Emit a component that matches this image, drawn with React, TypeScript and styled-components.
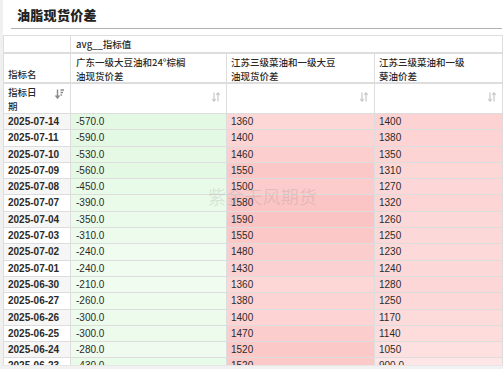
import React from "react";
import styled, { createGlobalStyle } from "styled-components";

/* ─── Global ─── */

const GlobalStyle = createGlobalStyle`
  html, body {
    margin: 0;
    padding: 0;
    background: #f0f0f0;
    overflow: hidden;
  }
  * {
    box-sizing: border-box;
  }
`;

/* ─── Styled Components ─── */

const Page = styled.div`
  width: 504px;
  height: 369px;
  display: flex;
  font-family: "Liberation Sans", "Noto Sans CJK SC", sans-serif;
  color: #333;
`;

const Panel = styled.div`
  flex: 1;
  margin-left: 3px;
  background: #fff;
  display: flex;
  flex-direction: column;
`;

const TitleBar = styled.div`
  height: 29px;
  margin: 0 2px 0 8px;
  padding-left: 6px;
  display: flex;
  align-items: center;
  border-bottom: 1px solid #b0b0b0;
  h1 {
    margin: 0;
    font-family: "Noto Sans CJK SC", sans-serif;
    font-size: 13px;
    font-weight: 900;
    color: #222;
    letter-spacing: 0.3px;
  }
`;

const TableWrap = styled.div`
  position: relative;
  margin-top: 6px;
  height: 330px;
  width: 500px;
  overflow: hidden;
  border-top: 1px solid #ddd;
  border-left: 1px solid #ddd;
  font-size: 9.5px;
`;

const Row = styled.div<{ $h: number; $bb?: number }>`
  display: grid;
  grid-template-columns: 67px 156px 148px 128px;
  height: ${(p) => p.$h}px;
  border-bottom: ${(p) => p.$bb ?? 1}px solid #ddd;
`;

const Cell = styled.div<{ $bold?: boolean; $pad?: number; $span?: boolean }>`
  position: relative;
  border-right: 1px solid #ddd;
  padding-left: ${(p) => p.$pad ?? 4}px;
  font-weight: ${(p) => (p.$bold ? 700 : 400)};
  overflow: hidden;
  white-space: nowrap;
  ${(p) => (p.$span ? "grid-column: 2 / span 3;" : "")}
`;

const HeadCell = styled(Cell)<{ $bottom?: boolean }>`
  display: flex;
  flex-direction: column;
  justify-content: ${(p) => (p.$bottom ? "flex-end" : "flex-start")};
  line-height: 14px;
  padding-top: 1px;
  padding-bottom: 1px;
  font-family: "Noto Sans CJK SC", sans-serif;
  font-weight: 500;
  color: #2a2a2a;
`;

const DataCell = styled(Cell)`
  line-height: 16px;
  font-size: 10px;
  color: #2a2a2a;
`;

const SortBox = styled.span<{ $top: number }>`
  position: absolute;
  right: 6px;
  top: ${(p) => p.$top}px;
  display: flex;
`;

const Scrollbar = styled.div`
  height: 4px;
  width: 500px;
  background: #f1f1f1;
  border-top: 1px solid #e6e6e6;
`;

const Watermark = styled.div`
  position: absolute;
  left: 204px;
  top: 147px;
  font-family: "Noto Sans CJK SC", sans-serif;
  font-size: 18px;
  color: rgba(110, 110, 110, 0.16);
  letter-spacing: 0.2px;
  pointer-events: none;
`;

/* ─── Icons ─── */

const SortDesc = () => (
  <svg width="9" height="10" viewBox="0 0 9 10">
    <path d="M2.5 0.5V8.5M0.5 6.5L2.5 9L4.5 6.5" stroke="#8a8a8a" strokeWidth="1.4" fill="none" />
    <path d="M5.5 1H9M5.5 3.5H8M5.5 6H7" stroke="#8a8a8a" strokeWidth="1.3" />
  </svg>
);

const SortBoth = () => (
  <svg width="8" height="10" viewBox="0 0 8 10">
    <path d="M2 0.5V9M0.3 7L2 9.3L3.7 7" stroke="#c8c8c8" strokeWidth="1.2" fill="none" />
    <path d="M6 9.5V1M4.3 3L6 0.7L7.7 3" stroke="#c8c8c8" strokeWidth="1.2" fill="none" />
  </svg>
);

/* ─── Data ─── */

const rows: [string, string, string, string][] = [
  ["2025-07-14", "-570.0", "1360", "1400"],
  ["2025-07-11", "-590.0", "1400", "1380"],
  ["2025-07-10", "-530.0", "1460", "1350"],
  ["2025-07-09", "-560.0", "1550", "1310"],
  ["2025-07-08", "-450.0", "1500", "1270"],
  ["2025-07-07", "-390.0", "1580", "1320"],
  ["2025-07-04", "-350.0", "1590", "1260"],
  ["2025-07-03", "-310.0", "1550", "1250"],
  ["2025-07-02", "-240.0", "1480", "1230"],
  ["2025-07-01", "-240.0", "1430", "1240"],
  ["2025-06-30", "-210.0", "1360", "1280"],
  ["2025-06-27", "-260.0", "1380", "1250"],
  ["2025-06-26", "-300.0", "1400", "1170"],
  ["2025-06-25", "-300.0", "1470", "1140"],
  ["2025-06-24", "-280.0", "1520", "1050"],
  ["2025-06-23", "-430.0", "1520", "900.0"],
];

const mix = (a: number[], b: number[], t: number) =>
  `rgb(${a.map((v, i) => Math.round(v + (b[i] - v) * t)).join(",")})`;

const scale = (v: number, min: number, max: number) => Math.min(1, Math.max(0, (v - min) / (max - min)));

const greenBg = (v: number) => mix([240, 252, 240], [227, 249, 227], scale(-v, 210, 590));
const red3Bg = (v: number) => mix([253, 214, 214], [251, 196, 196], scale(v, 1360, 1590));
const red4Bg = (v: number) => mix([254, 230, 230], [253, 210, 210], scale(v, 900, 1400));

/* ─── Component ─── */

export default function App() {
  return (
    <>
      <GlobalStyle />
      <Page>
        <Panel>
          <TitleBar>
            <h1>油脂现货价差</h1>
          </TitleBar>

          <TableWrap>
            <Row $h={18} $bb={2}>
              <HeadCell />
              <HeadCell $span $pad={5}>
                <span>avg__指标值</span>
              </HeadCell>
            </Row>

            <Row $h={30} $bb={2}>
              <HeadCell $bottom>
                <span>指标名</span>
              </HeadCell>
              <HeadCell $pad={5}>
                <span>广东一级大豆油和24°棕榈</span>
                <span>油现货价差</span>
              </HeadCell>
              <HeadCell>
                <span>江苏三级菜油和一级大豆</span>
                <span>油现货价差</span>
              </HeadCell>
              <HeadCell>
                <span>江苏三级菜油和一级</span>
                <span>葵油价差</span>
              </HeadCell>
            </Row>

            <Row $h={30}>
              <HeadCell>
                <span>指标日</span>
                <span>期</span>
                <SortBox $top={5}>
                  <SortDesc />
                </SortBox>
              </HeadCell>
              {[0, 1, 2].map((i) => (
                <HeadCell key={i}>
                  <SortBox $top={8}>
                    <SortBoth />
                  </SortBox>
                </HeadCell>
              ))}
            </Row>

            {rows.map(([date, a, b, c], idx) => (
              <Row key={date} $h={16.3}>
                <DataCell $bold style={{ background: idx % 2 === 0 ? "#f6f6f6" : "#fff" }}>
                  {date}
                </DataCell>
                <DataCell $pad={5} style={{ background: greenBg(parseFloat(a)) }}>
                  {a}
                </DataCell>
                <DataCell style={{ background: red3Bg(parseFloat(b)) }}>{b}</DataCell>
                <DataCell style={{ background: red4Bg(parseFloat(c)) }}>{c}</DataCell>
              </Row>
            ))}

            <Watermark>紫金天风期货</Watermark>
          </TableWrap>
          <Scrollbar />
        </Panel>
      </Page>
    </>
  );
}
